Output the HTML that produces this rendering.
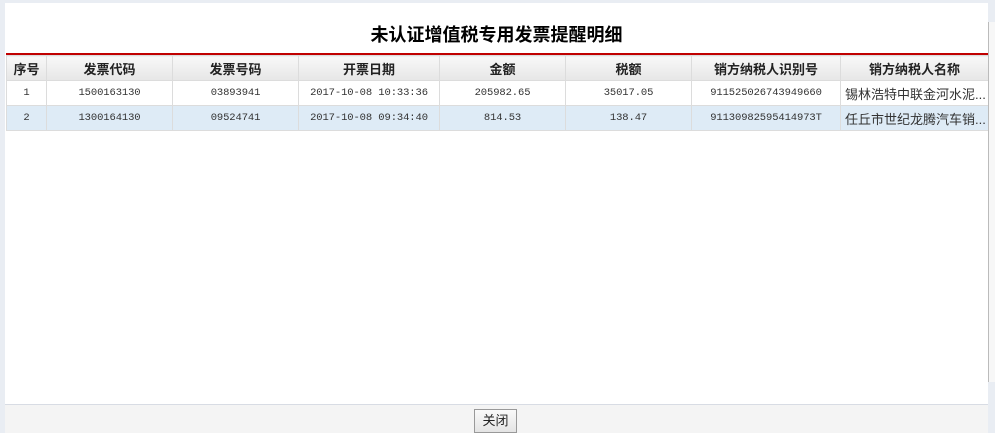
<!DOCTYPE html><html><head><meta charset="utf-8"><style>
body{margin:0;width:995px;height:432px;background:#e9edf3;position:relative;overflow:hidden;font-family:"Liberation Sans","Noto Sans CJK SC",sans-serif}
.dlg{position:absolute;left:5px;top:3px;width:983px;height:401px;background:#fff}
h1{margin:0;position:absolute;top:18px;left:0;width:100%;text-align:center;font-size:18px;font-weight:bold;color:#000}
.red{position:absolute;left:1px;top:50px;width:982px;height:2px;background:#c00000}
table{position:absolute;left:1px;top:52px;width:982px;border-collapse:collapse;table-layout:fixed;font-size:12px}
td,th{border:1px solid #dcdcdc;text-align:center;height:24px;padding:0;white-space:nowrap;overflow:hidden}
th{background:linear-gradient(#f8f8f8,#e6e6e6);font-size:13px;color:#222}
td{color:#333;font-family:"Liberation Mono","Noto Sans CJK SC",monospace;font-size:10.5px;letter-spacing:-0.1px}
td.n{font-family:"Liberation Sans","Noto Sans CJK SC",sans-serif;font-size:13px;text-align:left;padding-left:4px;letter-spacing:0}
tr.s td{background:#deebf6}
.bar{position:absolute;left:5px;top:404px;width:983px;height:28px;background:#f4f4f4;border-top:1px solid #d8dce4}
.btn{position:absolute;left:474px;top:409px;width:41px;height:22px;border:1px solid #999;background:linear-gradient(#fafafa,#e4e4e4);font-size:13px;text-align:center;line-height:22px;color:#222}
.sb{position:absolute;left:988px;top:22px;width:7px;height:360px;background:#f7f7f7;border-left:1px solid #bbb}
</style></head><body>
<div class="dlg"><h1>未认证增值税专用发票提醒明细</h1><div class="red"></div>
<table><colgroup><col style="width:40px"><col style="width:126px"><col style="width:126px"><col style="width:141px"><col style="width:126px"><col style="width:126px"><col style="width:149px"><col style="width:148px"></colgroup>
<tr><th>序号</th><th>发票代码</th><th>发票号码</th><th>开票日期</th><th>金额</th><th>税额</th><th>销方纳税人识别号</th><th>销方纳税人名称</th></tr>
<tr><td>1</td><td>1500163130</td><td>03893941</td><td>2017-10-08 10:33:36</td><td>205982.65</td><td>35017.05</td><td>911525026743949660</td><td class="n">锡林浩特中联金河水泥...</td></tr>
<tr class="s"><td>2</td><td>1300164130</td><td>09524741</td><td>2017-10-08 09:34:40</td><td>814.53</td><td>138.47</td><td>91130982595414973T</td><td class="n">任丘市世纪龙腾汽车销...</td></tr>
</table></div>
<div class="sb"></div>
<div class="bar"></div><div class="btn">关闭</div>
</body></html>
